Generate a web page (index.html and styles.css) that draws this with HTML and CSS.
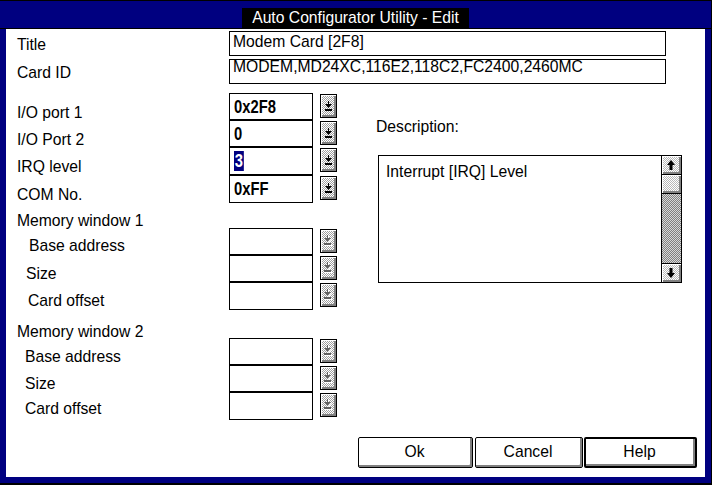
FILE: index.html
```html
<!DOCTYPE html>
<html>
<head>
<meta charset="utf-8">
<link rel="stylesheet" href="styles.css">
</head>
<body>
<div class="window">
  <div class="titlebar"><span class="title">Auto Configurator Utility - Edit</span></div>
  <div class="content">
    <div class="head">
      <div class="lbl">Title</div>
      <div class="tbox">Modem Card [2F8]</div>
      <div class="lbl">Card ID</div>
      <div class="tbox tbox-card">MODEM,MD24XC,116E2,118C2,FC2400,2460MC</div>
    </div>
    <div class="main">
      <div class="form">
        <div class="flabel io">I/O port 1</div>
        <div class="field"><span class="fv">0x2F8</span></div>
        <div class="drop"><svg width="7" height="10" viewBox="0 0 7 10"><path d="M3 0h1v3h3L3.5 7 0 3h3z"/><rect y="8" width="7" height="2"/></svg></div>

        <div class="flabel io">I/O Port 2</div>
        <div class="field"><span class="fv">0</span></div>
        <div class="drop"><svg width="7" height="10" viewBox="0 0 7 10"><path d="M3 0h1v3h3L3.5 7 0 3h3z"/><rect y="8" width="7" height="2"/></svg></div>

        <div class="flabel io">IRQ level</div>
        <div class="field"><span class="fv sel">3</span></div>
        <div class="drop"><svg width="7" height="10" viewBox="0 0 7 10"><path d="M3 0h1v3h3L3.5 7 0 3h3z"/><rect y="8" width="7" height="2"/></svg></div>

        <div class="flabel io">COM No.</div>
        <div class="field"><span class="fv">0xFF</span></div>
        <div class="drop"><svg width="7" height="10" viewBox="0 0 7 10"><path d="M3 0h1v3h3L3.5 7 0 3h3z"/><rect y="8" width="7" height="2"/></svg></div>

        <div class="group g1">Memory window 1</div>

        <div class="flabel ind-a">Base address</div>
        <div class="field"></div>
        <div class="drop off"><svg width="8" height="11" viewBox="0 0 8 11"><g fill="#fff" transform="translate(1 1)"><path d="M3 0h1v3h3L3.5 7 0 3h3z"/><rect y="8" width="7" height="2"/></g><g fill="#606060"><path d="M3 0h1v3h3L3.5 7 0 3h3z"/><rect y="8" width="7" height="2"/></g></svg></div>

        <div class="flabel ind-b">Size</div>
        <div class="field"></div>
        <div class="drop off"><svg width="8" height="11" viewBox="0 0 8 11"><g fill="#fff" transform="translate(1 1)"><path d="M3 0h1v3h3L3.5 7 0 3h3z"/><rect y="8" width="7" height="2"/></g><g fill="#606060"><path d="M3 0h1v3h3L3.5 7 0 3h3z"/><rect y="8" width="7" height="2"/></g></svg></div>

        <div class="flabel ind-c">Card offset</div>
        <div class="field"></div>
        <div class="drop off"><svg width="8" height="11" viewBox="0 0 8 11"><g fill="#fff" transform="translate(1 1)"><path d="M3 0h1v3h3L3.5 7 0 3h3z"/><rect y="8" width="7" height="2"/></g><g fill="#606060"><path d="M3 0h1v3h3L3.5 7 0 3h3z"/><rect y="8" width="7" height="2"/></g></svg></div>

        <div class="group g2">Memory window 2</div>

        <div class="flabel ind-d">Base address</div>
        <div class="field"></div>
        <div class="drop off"><svg width="8" height="11" viewBox="0 0 8 11"><g fill="#fff" transform="translate(1 1)"><path d="M3 0h1v3h3L3.5 7 0 3h3z"/><rect y="8" width="7" height="2"/></g><g fill="#606060"><path d="M3 0h1v3h3L3.5 7 0 3h3z"/><rect y="8" width="7" height="2"/></g></svg></div>

        <div class="flabel ind-d">Size</div>
        <div class="field"></div>
        <div class="drop off"><svg width="8" height="11" viewBox="0 0 8 11"><g fill="#fff" transform="translate(1 1)"><path d="M3 0h1v3h3L3.5 7 0 3h3z"/><rect y="8" width="7" height="2"/></g><g fill="#606060"><path d="M3 0h1v3h3L3.5 7 0 3h3z"/><rect y="8" width="7" height="2"/></g></svg></div>

        <div class="flabel ind-d last">Card offset</div>
        <div class="field"></div>
        <div class="drop off"><svg width="8" height="11" viewBox="0 0 8 11"><g fill="#fff" transform="translate(1 1)"><path d="M3 0h1v3h3L3.5 7 0 3h3z"/><rect y="8" width="7" height="2"/></g><g fill="#606060"><path d="M3 0h1v3h3L3.5 7 0 3h3z"/><rect y="8" width="7" height="2"/></g></svg></div>
      </div>
      <div class="desc">
        <div class="desc-label">Description:</div>
        <div class="listbox">
          <div class="list-text">Interrupt [IRQ] Level</div>
          <div class="sb">
            <div class="sb-btn sb-up"><svg width="8" height="10" viewBox="0 0 8 10"><path d="M4 0L8 5H5.5v5h-3V5H0z"/></svg></div>
            <div class="sb-btn sb-thumb"></div>
            <div class="sb-track"></div>
            <div class="sb-btn sb-down"><svg width="8" height="10" viewBox="0 0 8 10"><path d="M2.5 0h3v5H8L4 10 0 5h2.5z"/></svg></div>
          </div>
        </div>
      </div>
    </div>
    <div class="actions">
      <div class="btn btn-ok">Ok</div>
      <div class="btn btn-cancel">Cancel</div>
      <div class="btn btn-help">Help</div>
    </div>
  </div>
</div>
</body>
</html>
```
FILE: styles.css
```css
* { box-sizing: border-box; }

body {
  margin: 0;
  font-family: "Liberation Sans", Arial, sans-serif;
  font-size: 15.7px;
  color: #000;
}

.window {
  width: 712px;
  height: 485px;
  background: #000080;
  border-top: 1px solid #000;
  border-right: 1px solid #000;
  border-bottom: 2px solid #000;
  padding: 0 6px 6px 6px;
  display: flex;
  flex-direction: column;
}

.titlebar {
  height: 28px;
  margin: 0 -6px;
  border-bottom: 1px solid #000;
  display: flex;
  justify-content: center;
  align-items: flex-end;
  flex: none;
}

.title {
  background: #000;
  color: #fff;
  width: 227px;
  height: 20px;
  line-height: 20px;
  text-align: center;
  white-space: nowrap;
}

.content {
  flex: 1;
  background: #fff;
  padding: 2px 0 0 11px;
  display: flex;
  flex-direction: column;
}

.head {
  display: grid;
  grid-template-columns: 212px 437px;
  grid-template-rows: 25px 25px;
  row-gap: 3px;
}

.lbl {
  line-height: 20px;
  padding-top: 4px;
  white-space: nowrap;
}

.tbox {
  border: 1px solid #000;
  padding-left: 3px;
  line-height: 20px;
  white-space: nowrap;
  overflow: hidden;
}

.tbox-card { line-height: 14px; }

.main {
  display: flex;
  margin-top: 9px;
}

.form {
  display: grid;
  grid-template-columns: 212px 84px 24px;
  grid-template-rows: 27px 27px 28px 28px 25px 27px 27px 28px 28px 27px 27px 28px;
}

.flabel {
  line-height: 20px;
  padding-top: 9px;
  white-space: nowrap;
}

.flabel.io { padding-top: 10px; }
.flabel.last { padding-top: 7px; }

.ind-a { padding-left: 12px; padding-top: 8px; }
.ind-b { padding-left: 9px; }
.ind-c { padding-left: 11px; }
.ind-d { padding-left: 8px; }

.group {
  grid-column: 1 / -1;
  line-height: 20px;
  white-space: nowrap;
}
.g1 { padding-top: 8px; }
.g2 { padding-top: 12px; }

.field {
  border: 1px solid #000;
  font-family: "Liberation Sans", Arial, sans-serif;
  font-weight: bold;
  font-size: 18px;
  line-height: 20px;
  padding: 3px 0 0 4px;
  white-space: nowrap;
}

.fv {
  display: inline-block;
  transform: scaleX(0.82);
  transform-origin: left center;
}

.sel {
  background: #000080;
  color: #fff;
  padding: 0 1px;
}

.drop {
  align-self: start;
  margin: 1px 0 0 7px;
  width: 17px;
  height: 24px;
  border: 1px solid #000;
  background-image: repeating-conic-gradient(#a0a0a0 0% 25%, #ffffff 0% 50%);
  background-size: 2px 2px;
  box-shadow: inset 1px 1px 0 #fff, inset -2px -2px 0 #808080;
  display: flex;
  align-items: center;
  justify-content: center;
  padding: 0 1px 1px 0;
}

.drop svg { display: block; }

.desc {
  margin-left: 39px;
  padding-top: 24px;
}

.desc-label {
  line-height: 20px;
}

.listbox {
  margin: 18px 0 0 2px;
  width: 304px;
  height: 128px;
  border: 1px solid #000;
  display: flex;
}

.list-text {
  flex: 1;
  padding: 6px 0 0 7px;
  line-height: 20px;
}

.sb {
  width: 20px;
  border-left: 1px solid #000;
  display: flex;
  flex-direction: column;
}

.sb-btn {
  flex: none;
  height: 19px;
  background-image: repeating-conic-gradient(#b8b8b8 0% 25%, #ffffff 0% 50%);
  background-size: 2px 2px;
  box-shadow: inset 1px 1px 0 #fff, inset -2px -2px 0 #808080;
  display: flex;
  align-items: center;
  justify-content: center;
  padding: 0 1px 1px 0;
}

.sb-up { border-bottom: 1px solid #000; }
.sb-thumb { border-bottom: 1px solid #000; }
.sb-down { border-top: 1px solid #000; }

.sb-track {
  flex: 1;
  background-image: repeating-conic-gradient(#808080 0% 25%, #d8d8d8 0% 50%);
  background-size: 2px 2px;
}

.sb svg { display: block; }

.actions {
  display: flex;
  justify-content: flex-end;
  margin-top: 17px;
  padding-right: 8px;
}

.btn {
  height: 31px;
  border: 1px solid #000;
  border-radius: 2px;
  background: #fff;
  box-shadow: inset -2px -2px 0 #808080;
  display: flex;
  align-items: center;
  justify-content: center;
  line-height: 20px;
  padding: 0 2px 1px 0;
}

.btn-ok { width: 115px; margin-right: 2px; }
.btn-cancel { width: 108px; margin-right: 1px; }
.btn-help { width: 113px; border-width: 2px; }
```
